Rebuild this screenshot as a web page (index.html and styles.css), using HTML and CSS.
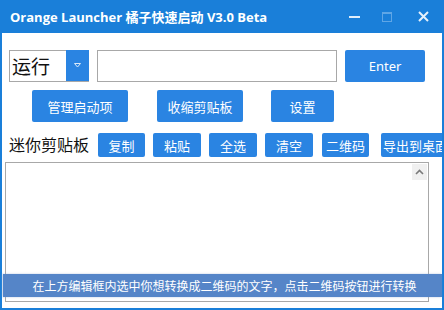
FILE: index.html
```html
<!DOCTYPE html>
<html>
<head>
<meta charset="utf-8">
<link rel="stylesheet" href="styles.css">
</head>
<body>
<div class="window">
  <div class="titlebar">
    <div class="title">Orange Launcher 橘子快速启动 V3.0 Beta</div>
    <div class="controls">
      <span class="ctl min"><svg width="11" height="11" viewBox="0 0 11 11"><rect x="0" y="5" width="11" height="2" fill="#dfeefb"/></svg></span>
      <span class="ctl max"><svg width="10" height="10" viewBox="0 0 10 10"><rect x="0.5" y="0.5" width="9" height="9" fill="none" stroke="#5fa6e6" stroke-width="1"/><rect x="0.5" y="0.5" width="9" height="1.5" fill="#5fa6e6"/></svg></span>
      <span class="ctl close"><svg width="11" height="11" viewBox="0 0 11 11"><path d="M1 1L10 10M10 1L1 10" stroke="#e6f1fb" stroke-width="2"/></svg></span>
    </div>
  </div>
  <div class="body">
    <div class="row row1">
      <div class="combo">
        <span class="combo-text">运行</span>
        <span class="combo-btn"><svg width="7" height="5" viewBox="0 0 7 5"><path d="M0.5 0.5L3.5 4L6.5 0.5Z" fill="none" stroke="#dbe9f8" stroke-width="1"/></svg></span>
      </div>
      <div class="input"></div>
      <button class="btn enter">Enter</button>
    </div>
    <div class="row row2">
      <button class="btn b-manage">管理启动项</button>
      <button class="btn b-shrink">收缩剪贴板</button>
      <button class="btn b-set">设置</button>
    </div>
    <div class="row row3">
      <span class="label">迷你剪贴板</span>
      <button class="sbtn s1">复制</button>
      <button class="sbtn s2">粘贴</button>
      <button class="sbtn s3">全选</button>
      <button class="sbtn s4">清空</button>
      <button class="sbtn s5">二维码</button>
      <button class="sbtn s6">导出到桌面</button>
    </div>
    <div class="area">
      <div class="scroll">
        <span class="arrow"><svg width="9" height="6" viewBox="0 0 9 6"><path d="M1 5L4.5 1.5L8 5" fill="none" stroke="#7a7a7a" stroke-width="1.6"/></svg></span>
      </div>
    </div>
  </div>
  <div class="tip">在上方编辑框内选中你想转换成二维码的文字，点击二维码按钮进行转换</div>
</div>
</body>
</html>
```
FILE: styles.css
```css
* { box-sizing: border-box; }
html, body { margin: 0; padding: 0; }
body {
  width: 444px; height: 310px; overflow: hidden;
  font-family: "Noto Sans CJK SC", "Noto Sans", sans-serif;
  background: #fff;
}
.window {
  position: relative;
  width: 444px; height: 310px;
  background: #1a7fd9;
  padding: 0 2px 2px 2px;
  display: flex; flex-direction: column;
}
.titlebar {
  height: 33px;
  display: flex; align-items: center;
  margin: 0 -2px;
  padding-left: 10px;
}
.title {
  color: #fff; font-weight: bold;
  font-family: "Open Sans", "Noto Sans CJK SC", sans-serif;
  font-size: 13px; letter-spacing: 0;
  flex: 1; padding-bottom: 1px;
}
.controls { display: flex; align-items: center; }
.ctl { display: flex; align-items: center; justify-content: center; }
.ctl.min { width: 11px; margin-right: 22px; }
.ctl.max { width: 10px; margin-right: 26px; }
.ctl.close { width: 11px; margin-right: 15px; }
.body {
  flex: 1; background: #fff;
  position: relative;
  overflow: hidden;
  padding-top: 17px;
}
.row { display: flex; align-items: center; }
.row1 { height: 32px; padding-left: 7px; }
.combo {
  width: 80px; height: 32px;
  border: 1px solid #a8a8a8; border-right: none;
  display: flex; background: #fff;
}
.combo-text {
  flex: 1; font-size: 19px; line-height: 30px; color: #111; padding-left: 2px;
}
.combo-btn {
  width: 23px; height: 31px; margin-top: -1px;
  background: #2a84e2; display: flex; align-items: center; justify-content: center;
}
.input {
  width: 240px; height: 32px; margin-left: 8px;
  border: 1px solid #a8a8a8;
}
.btn {
  border: none; border-radius: 2px;
  background: #2a84e2; color: #fff;
  font-family: "Noto Sans CJK SC", sans-serif;
  font-size: 13px; height: 32px; padding: 0;
}
.enter { width: 80px; margin-left: 8px; font-family: "Noto Sans", sans-serif; font-size: 13px; }
.row2 { height: 32px; margin-top: 8px; }
.b-manage { width: 96px; margin-left: 30px; }
.b-shrink { width: 86px; margin-left: 29px; }
.b-set { width: 63px; margin-left: 28px; }
.row3 { height: 24px; margin-top: 11px; padding-left: 7px; flex-wrap: nowrap; white-space: nowrap; }
.label { font-size: 16px; color: #111; width: 89px; flex: none; line-height: 24px; margin-top: -2px; }
.sbtn {
  border: none; border-radius: 2px;
  background: #2a84e2; color: #fff;
  font-family: "Noto Sans CJK SC", sans-serif;
  font-size: 13px; height: 24px; padding: 0; flex: none;
}
.s1 { width: 47px; }
.s2 { width: 48px; margin-left: 8px; }
.s3 { width: 48px; margin-left: 8px; }
.s4 { width: 48px; margin-left: 8px; }
.s5 { width: 47px; margin-left: 9px; }
.s6 { width: 66px; margin-left: 12px; text-align: left; padding-left: 2px; }
.area {
  position: relative;
  margin: 5px 0 0 3px;
  width: 424px; height: 140px;
  border: 1px solid #a8a8a8;
}
.scroll {
  position: absolute; right: 0; top: 0; bottom: 0; width: 16px;
}
.arrow {
  margin: 1px 0 0 0;
  width: 15px; height: 16px; background: #f0f0f0;
  display: flex; align-items: center; justify-content: center;
}
.tip {
  position: absolute; left: 3px; top: 274px;
  width: 439px; height: 23px;
  background: #5585c8; color: #fff;
  font-size: 12px; line-height: 23px;
  text-align: center;
  padding-left: 4px;
  box-shadow: -1px 0 2px rgba(120,150,200,0.5);
}
```
